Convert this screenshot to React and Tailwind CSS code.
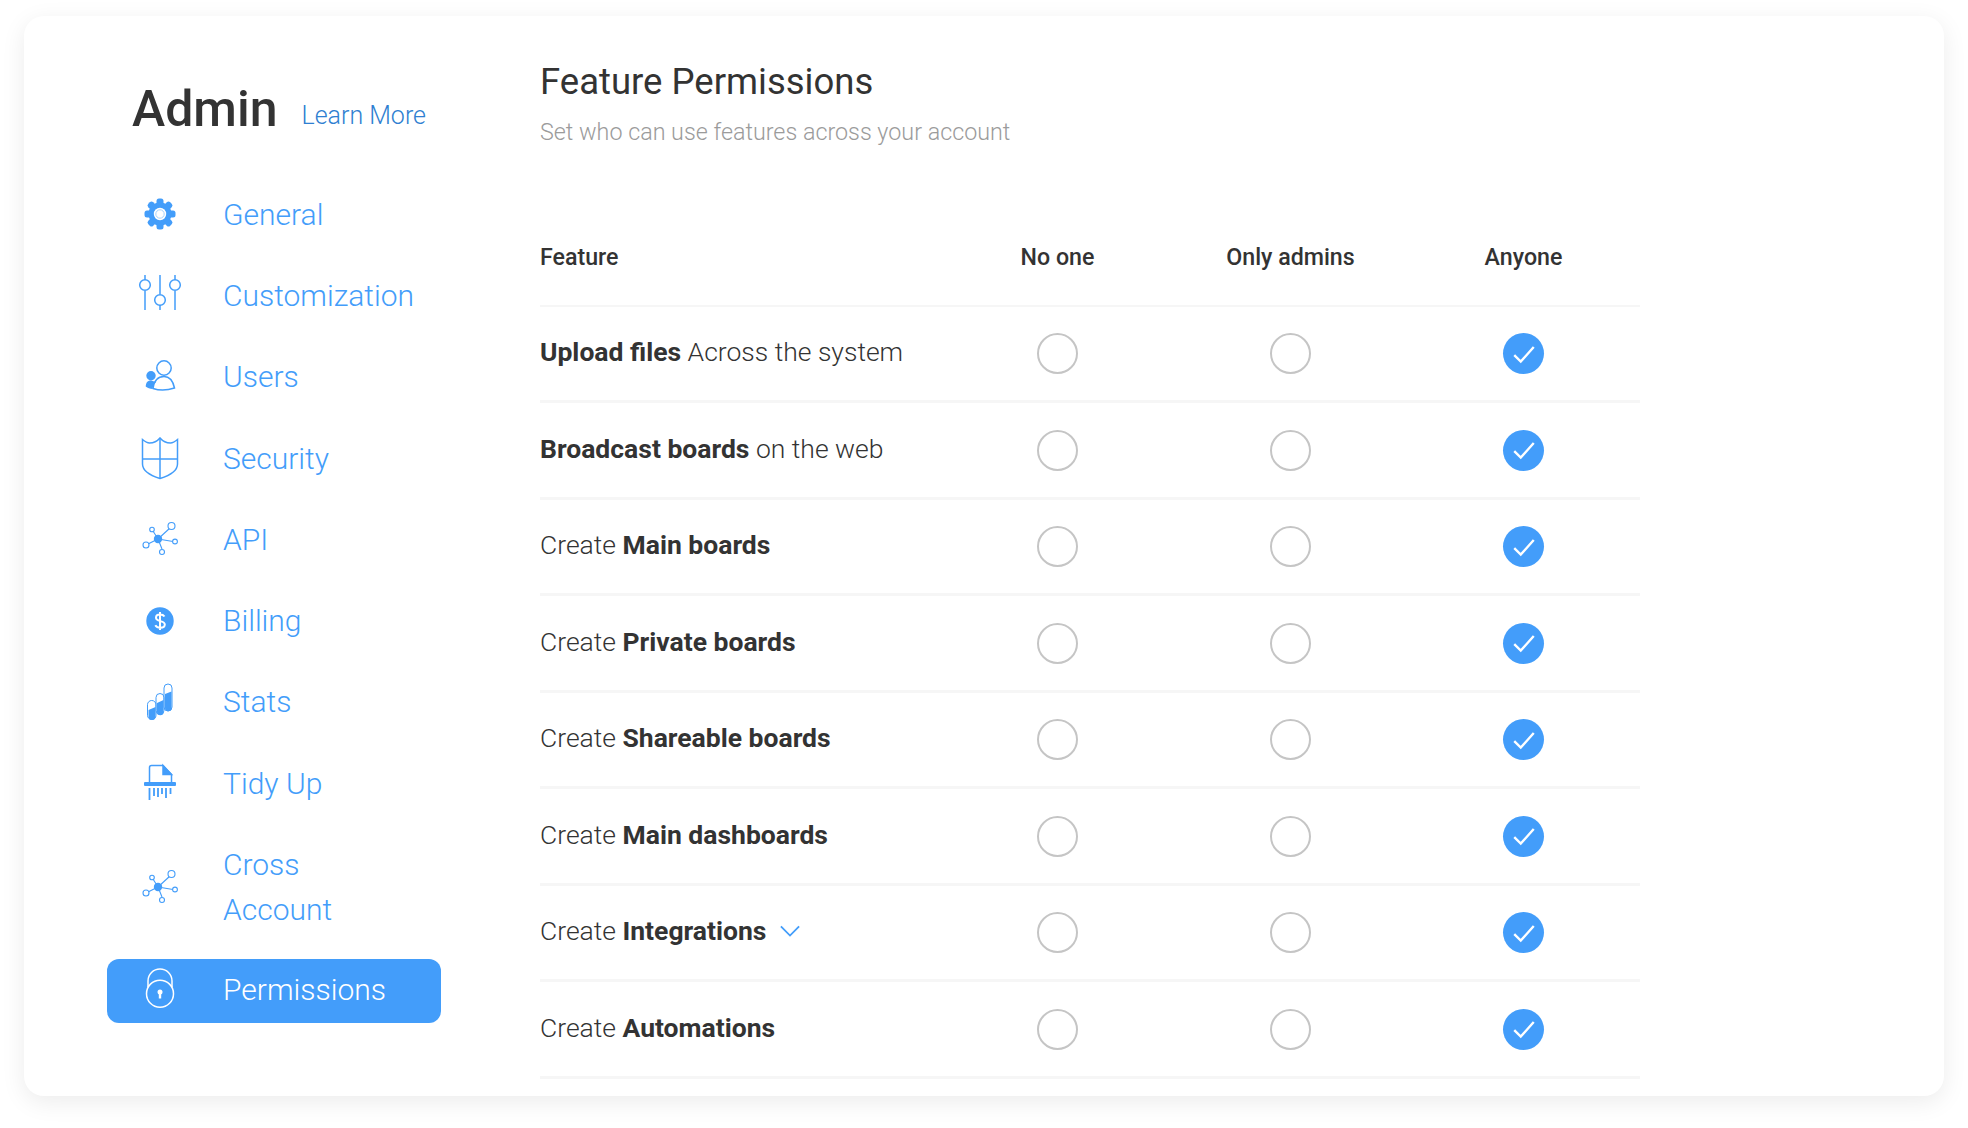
const rows = [
  [<b key="b" className="font-bold">Upload files</b>, " Across the system"],
  [<b key="b" className="font-bold">Broadcast boards</b>, " on the web"],
  ["Create ", <b key="b" className="font-bold">Main boards</b>],
  ["Create ", <b key="b" className="font-bold">Private boards</b>],
  ["Create ", <b key="b" className="font-bold">Shareable boards</b>],
  ["Create ", <b key="b" className="font-bold">Main dashboards</b>],
  ["Create ", <b key="b" className="font-bold">Integrations</b>],
  ["Create ", <b key="b" className="font-bold">Automations</b>],
]

function Icon({ children }) {
  return (
    <svg width="48" height="48" viewBox="0 0 48 48" fill="none" stroke="#439dfa" strokeWidth="1.5">
      {children}
    </svg>
  )
}

function GearIcon() {
  return (
    <Icon>
      {[0, 45, 90, 135, 180, 225, 270, 315].map((a) => (
        <rect key={a} x="20.5" y="8.5" width="7" height="8" rx="2.5" fill="#439dfa" stroke="none" transform={`rotate(${a} 24 24)`} />
      ))}
      <circle cx="24" cy="24" r="11.5" fill="#439dfa" stroke="none" />
      <circle cx="24" cy="24" r="6.2" fill="#fff" stroke="none" />
      <circle cx="24" cy="24" r="4.2" stroke="#a9d2fc" strokeWidth="1" />
    </Icon>
  )
}

function SlidersIcon() {
  return (
    <Icon>
      <path d="M9 4v5M9 20v19M24 4v19M24 34v5M39 4v5M39 20v19" />
      <circle cx="9" cy="14" r="5.3" />
      <circle cx="24" cy="29" r="5.3" />
      <circle cx="39" cy="14" r="5.3" />
    </Icon>
  )
}

function UsersIcon() {
  return (
    <Icon>
      <circle cx="28" cy="15" r="7.200" />
      <path d="M17 35.500C18 28 22 23.500 28 23.500c6 0 9 4.500 10.500 11.500-7.500 2.500-15.500 2.500-21.500.5z" />
      <circle cx="15" cy="22.700" r="4.700" fill="#439dfa" stroke="none" />
      <path d="M9.700 33.500c.3-4.500 2.300-6 5.300-6l5 1.500c-2 2-3 4-3.500 7-2.500 0-5-1-6.800-2.500z" fill="#439dfa" stroke="none" />
    </Icon>
  )
}

function ShieldIcon() {
  return (
    <Icon>
      <path d="M6.500 5.500c3 2.500 5 3.500 7 3.500 4 0 7.500-1.500 10.500-5 3 3.500 6.500 5 10.500 5 2 0 4-1 7-3.500V30c0 7-8 11.500-17.500 14.500C14.500 41.500 6.500 37 6.500 30z" />
      <path d="M24 4v40M6.500 25h35" />
    </Icon>
  )
}

function NetworkIcon() {
  return (
    <Icon>
      <g strokeWidth="1.100">
        <path d="M22 24l12-11M22 24l-5-8M22 24l-10 5M22 24l4 10M22 24l15 2.500" />
        <circle cx="35.500" cy="11" r="3.500" fill="#fff" />
        <circle cx="16" cy="14.500" r="2.300" fill="#fff" />
        <circle cx="10" cy="30" r="3" fill="#fff" />
        <circle cx="26" cy="37" r="2.500" fill="#fff" />
        <circle cx="39" cy="26.500" r="2.400" fill="#fff" />
      </g>
      <circle cx="22" cy="24" r="4.200" fill="#439dfa" stroke="none" />
    </Icon>
  )
}

function BillingIcon() {
  return (
    <Icon>
      <circle cx="24" cy="24" r="13.700" fill="#439dfa" stroke="none" />
      <path d="M28.500 19.500c-1-1.500-2.500-2-4.500-2-2.500 0-4 1.200-4 3.200 0 4.500 8.800 2.300 8.800 6.800 0 2-1.800 3.200-4.500 3.200-2.300 0-4-.8-5-2.500M24 15v18" stroke="#fff" strokeWidth="2" />
    </Icon>
  )
}

function StatsIcon() {
  return (
    <Icon>
      <g transform="translate(-1.500 -2)">
        <g strokeWidth="1">
          <rect x="13" y="24.500" width="8.500" height="19" rx="4.200" />
          <rect x="21.500" y="17.500" width="8" height="21" rx="4" />
          <rect x="29.500" y="8" width="8" height="27" rx="4" />
        </g>
        <path d="M14 34l7-3v9.500a3.500 3.500 0 0 1-7 0z" fill="#439dfa" stroke="none" />
        <path d="M22.500 27l6.500-3v12a3.200 3.200 0 0 1-6.500 0z" fill="#439dfa" stroke="none" />
        <path d="M30.500 18l6.500-2.500V32a3.200 3.200 0 0 1-6.500 0z" fill="#439dfa" stroke="none" />
      </g>
    </Icon>
  )
}

function ShredderIcon() {
  return (
    <Icon>
      <path d="M13.500 23V8.500a2 2 0 0 1 2-2H27l8.500 9V23" />
      <path d="M27 6.500l8.500 9H27z" fill="#439dfa" />
      <rect x="8" y="23" width="32" height="4" rx="1" fill="#439dfa" stroke="none" />
      <path d="M13.500 29v12M18 29v8M22 29v9M26 29v6M30 29v10M34.500 29v6" strokeWidth="1.800" />
    </Icon>
  )
}

function LockIcon() {
  return (
    <svg width="48" height="48" viewBox="0 0 48 48" fill="none" stroke="#fff" strokeWidth="1.500">
      <circle cx="24" cy="26.700" r="13.500" />
      <path d="M12 20v-6a12 12 0 0 1 24 0v6" />
      <circle cx="24" cy="25" r="2.500" fill="#fff" stroke="none" />
      <path d="M24 26v5.500" strokeWidth="2.400" />
    </svg>
  )
}

const nav = [
  { label: "General", icon: <GearIcon /> },
  { label: "Customization", icon: <SlidersIcon /> },
  { label: "Users", icon: <UsersIcon /> },
  { label: "Security", icon: <ShieldIcon /> },
  { label: "API", icon: <NetworkIcon /> },
  { label: "Billing", icon: <BillingIcon /> },
  { label: "Stats", icon: <StatsIcon /> },
  { label: "Tidy Up", icon: <ShredderIcon /> },
]

function NavRow({ item }) {
  return (
    <div className="flex items-center h-[81.3px] text-[#439dfa]">
      <div className="w-[106px] flex justify-center">{item.icon}</div>
      <div className="ml-[10px] text-[30px] font-light">{item.label}</div>
    </div>
  )
}

function Radio() {
  return <div className="w-[41px] h-[41px] rounded-full border-2 border-[#c5c5c5]" />
}

function Checked() {
  return (
    <div className="w-[41px] h-[41px] rounded-full bg-[#439dfa] flex items-center justify-center">
      <svg width="26" height="26" viewBox="0 0 24 24" fill="none" stroke="#fff" strokeWidth="2.200">
        <path d="M3 13l6 6L21 5.500" />
      </svg>
    </div>
  )
}

export default function App() {
  return (
    <div className="w-[1968px] h-[1128px] bg-white pt-4 pl-6 font-['Roboto',sans-serif] overflow-hidden">
      <div className="w-[1920px] h-[1080px] bg-white rounded-[20px] shadow-[0_6px_24px_rgba(0,0,0,0.08)] flex">
        <aside className="w-[516px] pl-[83px] pt-[56px]">
          <div className="flex items-baseline pl-[25px] pt-[3.5px] h-[101.5px]">
            <h1 className="text-[50px] leading-[66px] font-medium text-[#333]">Admin</h1>
            <a className="ml-6 text-[25px] font-light text-[#2f7fd1] relative top-[-2px]">Learn More</a>
          </div>
          <nav>
            {nav.map((item) => (
              <NavRow key={item.label} item={item} />
            ))}
            <div className="flex items-center h-[126px] text-[#439dfa]">
              <div className="w-[106px] flex justify-center"><NetworkIcon /></div>
              <div className="ml-[10px] text-[30px] leading-[45px] font-light w-[140px]">Cross Account</div>
            </div>
            <div className="mt-[9px] w-[334px] h-[64px] rounded-[12px] bg-[#439dfa] flex items-center text-white">
              <div className="w-[106px] flex justify-center"><LockIcon /></div>
              <div className="ml-[10px] pb-[2px] text-[30px] font-light">Permissions</div>
            </div>
          </nav>
        </aside>

        <main className="w-[1100px] pt-[43px]">
          <h2 className="text-[36.500px] leading-[46px] text-[#333]">Feature Permissions</h2>
          <p className="mt-[10px] text-[23.300px] font-light text-[#9b9b9b]">Set who can use features across your account</p>

          <div className="mt-[87px] grid grid-cols-[401px_233px_233px_233px] items-center h-[70px] border-b-2 border-[#f6f6f6] pb-[27px] text-[23.200px] font-medium text-[#333]">
            <div>Feature</div>
            <div className="text-center">No one</div>
            <div className="text-center">Only admins</div>
            <div className="text-center">Anyone</div>
          </div>

          {rows.map((text, i) => (
            <div key={i} className="grid grid-cols-[401px_233px_233px_233px] items-center h-[96.5px] border-b-[3px] border-[#f6f6f6] text-[26.500px] font-light text-[#333]">
              <div className="flex items-center gap-[10px] pb-[3px]">
                <span>{text}</span>
                {i === 6 && (
                  <svg width="20" height="12" viewBox="0 0 22 12" fill="none" stroke="#439dfa" strokeWidth="2" className="ml-1">
                    <path d="M1 1l10 10L21 1" />
                  </svg>
                )}
              </div>
              <div className="flex justify-center"><Radio /></div>
              <div className="flex justify-center"><Radio /></div>
              <div className="flex justify-center"><Checked /></div>
            </div>
          ))}
        </main>
      </div>
    </div>
  )
}
